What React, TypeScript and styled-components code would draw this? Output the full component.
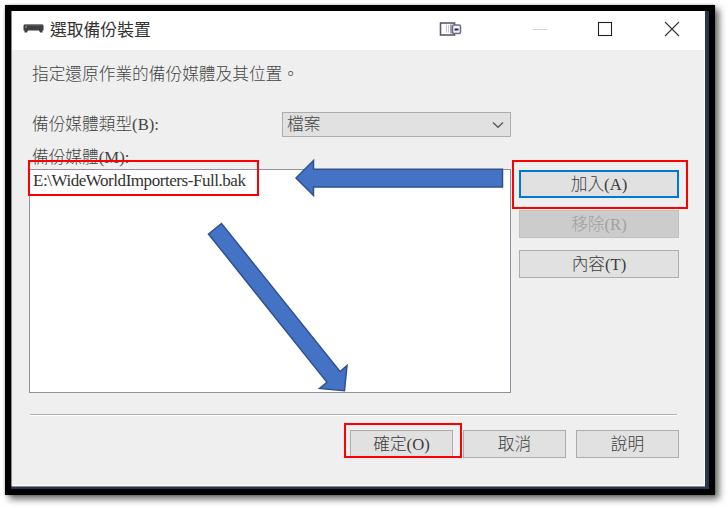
import React from 'react';
import styled, { createGlobalStyle } from 'styled-components';

const GlobalStyle = createGlobalStyle`
  * { box-sizing: border-box; }
  body {
    margin: 0;
    background: #fff;
    overflow: hidden;
  }
`;

const Stage = styled.main`
  position: relative;
  width: 728px;
  height: 508px;
  padding: 5px;
  font-family: 'Liberation Serif', 'Noto Sans CJK TC', serif;
  font-size: 16.7px;
  font-weight: 300;
  color: #444;
`;

const Frame = styled.div`
  width: 710px;
  height: 490px;
  border: 6px solid #000;
  padding: 0 4px 3px 1px;
  background: #263653;
  box-shadow: 4px 4px 7px rgba(0, 0, 0, 0.6), 0 0 2px rgba(0, 0, 0, 0.3);
`;

const Dialog = styled.section`
  display: flex;
  flex-direction: column;
  width: 693px;
  height: 475px;
  background: #efefef;
  border: solid #fff;
  border-width: 0 1px 1px 0;
  box-shadow: -1px 0 0 #8a8a8a, 0 1px 0 #8a8a8a;
`;

const TitleBar = styled.header`
  display: flex;
  align-items: center;
  flex: none;
  height: 39px;
  padding: 0 25px 4px 11px;
  margin-right: -1px;
  background: #fff;
  color: #333;
`;

const Title = styled.h1`
  flex: 1;
  margin: 0 0 0 6px;
  font: 400 16.8px/24px 'Noto Sans CJK TC', sans-serif;
`;

const Captions = styled.div`
  display: flex;
  align-items: center;
`;

const CaptionIcon = styled.svg<{ $gap: number }>`
  display: block;
  margin-left: ${(p) => p.$gap}px;
`;

const Content = styled.div`
  display: flex;
  flex-direction: column;
  padding: 13px 25px 0 17px;
`;

const Text = styled.span`
  line-height: 24px;
  white-space: nowrap;
`;

const Description = styled(Text)`
  padding-left: 3px;
`;

const TypeRow = styled.div`
  display: flex;
  align-items: center;
  height: 26px;
  margin-top: 24px;
  padding-left: 3px;
`;

const TypeLabel = styled(Text)`
  width: 250px;
  padding-top: 2px;
`;

const Select = styled.div`
  display: flex;
  align-items: center;
  justify-content: space-between;
  width: 229px;
  height: 25px;
  padding: 1px 6px 0 4px;
  border: 1px solid #adadad;
  background: #e1e1e1;
`;

const MediaArea = styled.div`
  display: grid;
  grid-template-columns: 482px 160px;
  column-gap: 8px;
  margin-top: 8px;
`;

const MediaLabel = styled(Text)`
  grid-column: 1 / 3;
  height: 24px;
  padding-left: 3px;
  line-height: 25px;
`;

const MediaList = styled.div`
  height: 224px;
  border: 1px solid #8f949c;
  background: #fff;
`;

const MediaItem = styled.div`
  padding-left: 3px;
  line-height: 22px;
  color: #333;
`;

const FilePath = styled.span`
  font-size: 17px;
  letter-spacing: -0.45px;
`;

const SideButtons = styled.div`
  display: flex;
  flex-direction: column;
  gap: 12px;
  padding-top: 1px;
`;

const Button = styled.button<{ $focused?: boolean }>`
  height: 28px;
  padding: 1px 0 0;
  border: ${(p) => (p.$focused ? '2px solid #0078d7' : '1px solid #adadad')};
  background: #e1e1e1;
  color: #3c3c3c;
  font: inherit;
  line-height: 24px;
  &:disabled {
    border-color: #bfbfbf;
    background: #ccc;
    color: #a0a0a0;
  }
`;

const Divider = styled.hr`
  width: 647px;
  height: 2px;
  margin: 21px 0 0 1px;
  border: 0;
  border-top: 1px solid #b0b0b0;
  background: #fff;
`;

const Footer = styled.footer`
  display: grid;
  grid-template-columns: repeat(3, 103px);
  column-gap: 10px;
  justify-content: end;
  width: 650px;
  margin-top: 14px;
`;

const Highlight = styled.div<{ $x: number; $y: number; $w: number; $h: number }>`
  position: absolute;
  left: ${(p) => p.$x}px;
  top: ${(p) => p.$y}px;
  width: ${(p) => p.$w}px;
  height: ${(p) => p.$h}px;
  border: 2px solid #f00;
  pointer-events: none;
`;

const Arrows = styled.svg`
  position: absolute;
  inset: 0;
  pointer-events: none;
`;

const DeviceIcon = () => (
  <svg width="21" height="9" viewBox="0 0 21 9">
    <path d="M1 0.5H20L20.5 1.5V6.5H19.5V8.5H17L16 6.5H5L4 8.5H1.5V6.5H0.5V1.5Z" fill="#3d3f42" />
    <path d="M2 1H19" stroke="#686b6e" />
    <path d="M2 3H4" stroke="#aaa" />
  </svg>
);

const DockIcon = () => (
  <CaptionIcon $gap={0} width="23" height="16" viewBox="0 0 23 16">
    <rect x="1.5" y="2" width="14" height="12" fill="#fff" stroke="#5a5b70" strokeWidth="1.6" />
    <path d="M7.5 4V11.5M9.5 4V11.5" stroke="#c6c7d0" />
    <path d="M12 3.5V12.5" stroke="#8d8e9e" strokeWidth="1.6" />
    <rect x="13.5" y="4" width="8" height="8.5" rx="1.5" fill="#f2f2f8" stroke="#6c6d82" strokeWidth="1.5" />
    <path d="M15.5 8.5H19.5" stroke="#292a45" strokeWidth="2" />
  </CaptionIcon>
);

export default function App() {
  return (
    <>
      <GlobalStyle />
      <Stage>
        <Frame>
          <Dialog>
            <TitleBar>
              <DeviceIcon />
              <Title>選取備份裝置</Title>
              <Captions>
                <DockIcon />
                <CaptionIcon $gap={71} width="14" height="16" viewBox="0 0 14 16">
                  <path d="M0 8.5H14" stroke="#d4d4d4" />
                </CaptionIcon>
                <CaptionIcon $gap={50} width="16" height="16" viewBox="0 0 16 16">
                  <rect x="1.5" y="1.5" width="13" height="13" fill="none" stroke="#222" strokeWidth="1.1" />
                </CaptionIcon>
                <CaptionIcon $gap={51} width="16" height="16" viewBox="0 0 16 16">
                  <path d="M1 1L15 15M15 1L1 15" stroke="#333" strokeWidth="1.1" />
                </CaptionIcon>
              </Captions>
            </TitleBar>
            <Content>
              <Description>指定還原作業的備份媒體及其位置。</Description>
              <TypeRow>
                <TypeLabel>備份媒體類型(B):</TypeLabel>
                <Select>
                  <Text>檔案</Text>
                  <svg width="12" height="8" viewBox="0 0 12 8">
                    <path d="M1 1.5L6 6.3L11 1.5" fill="none" stroke="#555" strokeWidth="1.2" />
                  </svg>
                </Select>
              </TypeRow>
              <MediaArea>
                <MediaLabel>備份媒體(M):</MediaLabel>
                <MediaList>
                  <MediaItem>
                    <FilePath>{'E:\\WideWorldImporters-Full.bak'}</FilePath>
                  </MediaItem>
                </MediaList>
                <SideButtons>
                  <Button $focused>加入(A)</Button>
                  <Button disabled>移除(R)</Button>
                  <Button>內容(T)</Button>
                </SideButtons>
              </MediaArea>
              <Divider />
              <Footer>
                <Button>確定(O)</Button>
                <Button>取消</Button>
                <Button>說明</Button>
              </Footer>
            </Content>
          </Dialog>
        </Frame>
        <Arrows width="728" height="508" viewBox="0 0 728 508">
          <g fill="#4472c4" stroke="#2f528f" strokeWidth="1.5">
            <path d="M296 178L313.5 160.5V169.3H502.5V187H313.5V195.5Z" />
            <path d="M208.5 234L221.5 223.5L340 371.5L347 365.5L344.5 390.7L319.5 388.5L327 382.3Z" />
          </g>
        </Arrows>
        <Highlight $x={28} $y={160} $w={231} $h={36} />
        <Highlight $x={512} $y={160} $w={176} $h={49} />
        <Highlight $x={344} $y={423} $w={118} $h={35} />
      </Stage>
    </>
  );
}
